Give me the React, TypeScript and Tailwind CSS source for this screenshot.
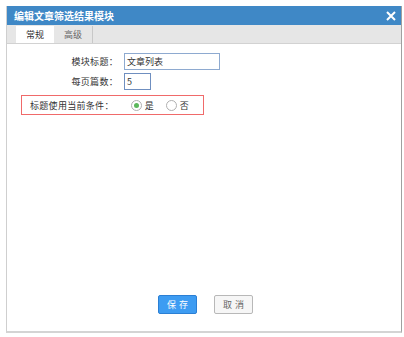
import React from 'react';

const font = { fontFamily: '"Microsoft YaHei", "Noto Sans CJK SC", sans-serif' };

export default function App() {
  return (
    <div className="w-[404px] h-[337px] bg-white pt-[6px] pl-[6px]" style={font}>
      <div className="w-[396px] h-[327px] flex flex-col border-r border-r-[#a0a0a0] border-b-2 border-b-[#d4d4d4] border-l border-l-[#cfcfcf] bg-white">
        {/* title bar */}
        <div className="h-[19px] bg-[#3f88c6] flex items-center justify-between pl-[7px] pr-[4px]">
          <span className="text-white text-[10px] font-bold leading-none">编辑文章筛选结果模块</span>
          <svg width="10" height="10" viewBox="0 0 10 10" className="mr-[1px]">
            <path d="M1 1 L9 9 M9 1 L1 9" stroke="#fff" strokeWidth="2" />
          </svg>
        </div>

        {/* tabs */}
        <div className="h-[19px] bg-[#e6e6e6] border-b border-b-[#d2d2d2] flex items-end pl-[9px]">
          <div className="h-[17px] w-[38px] bg-white flex items-center justify-center text-[9px] text-[#333] leading-none">常规</div>
          <div className="h-[17px] w-[39px] border-r border-r-[#c8c8c8] flex items-center justify-center text-[9px] text-[#666] leading-none">高级</div>
        </div>

        {/* form */}
        <div className="flex-1 flex flex-col text-[9px] text-[#333] leading-none">
          <div className="flex items-center mt-[9px] h-[17px]">
            <span className="w-[111px] text-right tracking-[0.3px]">模块标题：</span>
            <div className="ml-[6px] w-[96px] h-[17px] border border-[#8eaad0] flex items-center pl-[2px]">文章列表</div>
          </div>
          <div className="flex items-center mt-[3px] h-[17px]">
            <span className="w-[111px] text-right tracking-[0.3px]">每页篇数：</span>
            <div className="ml-[6px] w-[27px] h-[17px] border border-[#6f8fc0] flex items-center pl-[2px]">5</div>
          </div>
          <div className="ml-[14px] mt-[5px] w-[183px] h-[20px] border border-[#f06a6a] flex items-center">
            <span className="ml-[8px] tracking-[0.3px]">标题使用当前条件：</span>
            <span className="ml-[17px] w-[11px] h-[11px] rounded-full border border-[#b0b0b0] bg-white flex items-center justify-center">
              <span className="w-[5px] h-[5px] rounded-full bg-[#5cb85c]" />
            </span>
            <span className="ml-[3px]">是</span>
            <span className="ml-[12px] w-[11px] h-[11px] rounded-full border border-[#b0b0b0] bg-white" />
            <span className="ml-[3px]">否</span>
          </div>

          <div className="mt-auto mb-[17px] flex justify-center gap-[17px] pl-[3px]">
            <button className="w-[39px] h-[19px] bg-[#3d9cf2] border border-[#2b7fd4] text-white text-[9px] leading-none tracking-[3px] pl-[3px] rounded-[2px]">保存</button>
            <button className="w-[39px] h-[19px] bg-[#f6f6f6] border border-[#b8b8b8] text-[#666] text-[9px] leading-none tracking-[3px] pl-[3px] rounded-[2px]">取消</button>
          </div>
        </div>
      </div>
    </div>
  );
}
